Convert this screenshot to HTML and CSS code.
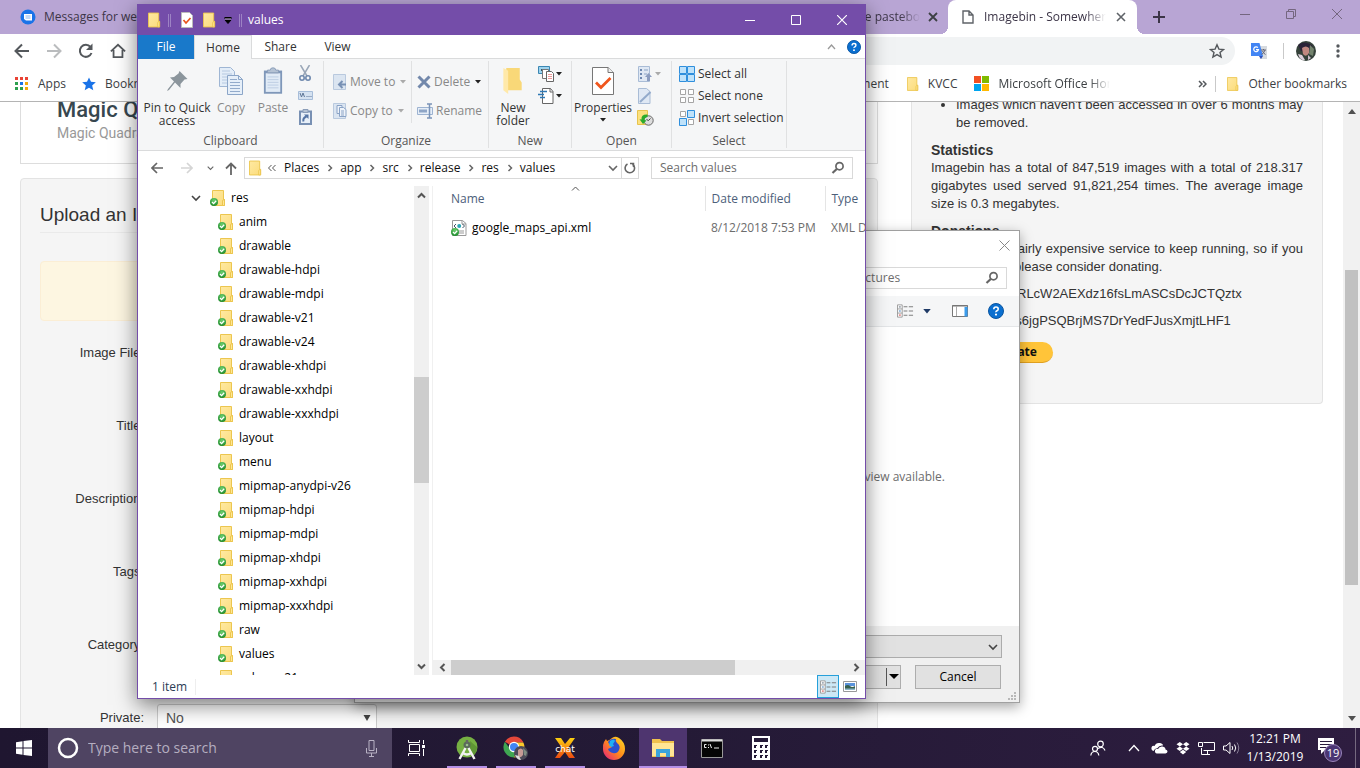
FILE: index.html
```html
<!DOCTYPE html>
<html lang="en">
<head>
<meta charset="utf-8">
<title>Desktop</title>
<link rel="stylesheet" href="styles.css">
</head>
<body>
<svg class="defs" aria-hidden="true">
  <defs>
    <linearGradient id="gFolder" x1="0" y1="0" x2="1" y2="1"><stop offset="0" stop-color="#ffe9a2"/><stop offset="1" stop-color="#fbdc7c"/></linearGradient>
    <radialGradient id="gCheck" cx=".5" cy=".3" r=".7"><stop offset="0" stop-color="#6fd06f"/><stop offset="1" stop-color="#1c8a2c"/></radialGradient>
  </defs>
  <symbol id="folder" viewBox="0 0 14 16"><path d="M.5.5h11v9h1v6H.5z" fill="url(#gFolder)" stroke="#ecc64f"/><path d="M10.500 15.500v-4.500q0-1.500 2-1.500v6z" fill="#ffe795" stroke="#ecc64f"/></symbol>
  <symbol id="folderok" viewBox="0 0 16 16"><path d="M2.500.5h11v9h1v6h-12z" fill="url(#gFolder)" stroke="#ecc64f"/><path d="M12.500 15.500v-4.500q0-1.500 2-1.500v6z" fill="#ffe795" stroke="#ecc64f"/><circle cx="4" cy="12" r="4" fill="url(#gCheck)"/><path d="M2 12l1.600 1.600L6.200 10.800" fill="none" stroke="#fff" stroke-width="1.300"/></symbol>
  <symbol id="chev-r" viewBox="0 0 8 8"><path d="M2.500 1l3 3-3 3" fill="none" stroke="#666" stroke-width="1.500"/></symbol>
  <symbol id="chev-d" viewBox="0 0 10 8"><path d="M1 2l4 4 4-4" fill="none" stroke="currentColor" stroke-width="1.600"/></symbol>
  <symbol id="tri" viewBox="0 0 6 4"><path d="M0 0h6L3 3.500z" fill="currentColor"/></symbol>
  <symbol id="lens" viewBox="0 0 14 14"><circle cx="8.500" cy="5.200" r="3.600" fill="none" stroke="#666" stroke-width="1.700"/><path d="M6 7.800L1.500 12" stroke="#666" stroke-width="2.200"/></symbol>
  <symbol id="help" viewBox="0 0 16 16"><circle cx="8" cy="8" r="7.500" fill="#0a6fd0" stroke="#0a55a0"/><path d="M5.800 6.200q0-2.200 2.200-2.200t2.200 1.900q0 1.200-1.200 1.900t-1 1.400" fill="none" stroke="#fff" stroke-width="1.600"/><circle cx="8" cy="11.600" r="1.100" fill="#fff"/></symbol>
  <symbol id="details" viewBox="0 0 18 14"><path d="M.5.5h5v13h-5zM.5 4.800h5M.5 9.200h5" fill="#fff" stroke="#999"/><path d="M2 2.200h2v1H2z" fill="#567"/><path d="M2 6.500h2v1H2z" fill="#37b"/><path d="M2 10.800h2v1H2z" fill="#c33"/><path d="M7 2.500h4M12.500 2.500H17M7 7h4M12.500 7H17M7 11.500h4M12.500 11.500H17" stroke="#777"/></symbol>
</svg>

<div class="desktop">
  <section class="browser">
    <div class="tabstrip">
      <div class="tab tab-first">
        <svg width="16" height="16" viewBox="0 0 16 16"><circle cx="8" cy="8" r="7.500" fill="#1a73e8"/><path d="M4 5h8v6.500H6L4 10z" fill="#fff"/><path d="M5.500 7h5M5.500 9h5" stroke="#8ab4f0"/></svg>
        <span>Messages for web</span>
      </div>
      <div class="tab tab-mid"><span class="fade">private pastebo</span>
        <svg width="10" height="10" viewBox="0 0 10 10"><path d="M1 1l8 8M9 1L1 9" stroke="#3c4043" stroke-width="1.800"/></svg>
      </div>
      <div class="tab tab-active">
        <svg width="12" height="14" viewBox="0 0 12 14"><path d="M1 1h6l4 4v8H1zM7 1v4h4" fill="none" stroke="#5f6368" stroke-width="1.400"/></svg>
        <span class="fade">Imagebin - Somewhere</span>
        <svg width="10" height="10" viewBox="0 0 10 10"><path d="M1 1l8 8M9 1L1 9" stroke="#5f6368" stroke-width="1.600"/></svg>
      </div>
      <button class="newtab" aria-label="New tab"><svg width="12" height="12" viewBox="0 0 12 12"><path d="M6 0v12M0 6h12" stroke="#3c3547" stroke-width="2"/></svg></button>
      <div class="winctl">
        <button aria-label="Minimize"><svg width="10" height="10" viewBox="0 0 10 10"><path d="M0 5.500h10" stroke="#74667f"/></svg></button>
        <button aria-label="Restore"><svg width="10" height="10" viewBox="0 0 10 10"><path d="M.5 2.500h7v7h-7zM2.500 2.500v-2h7v7h-2" fill="none" stroke="#74667f"/></svg></button>
        <button aria-label="Close"><svg width="10" height="10" viewBox="0 0 10 10"><path d="M0 0l10 10M10 0L0 10" stroke="#74667f"/></svg></button>
      </div>
    </div>
    <div class="toolbar">
      <button aria-label="Back"><svg width="16" height="16" viewBox="0 0 16 16"><path d="M15 8H2M8 1.500L1.500 8 8 14.500" fill="none" stroke="#54585c" stroke-width="2"/></svg></button>
      <button aria-label="Forward"><svg width="16" height="16" viewBox="0 0 16 16"><path d="M1 8h13M8 1.500L14.500 8 8 14.500" fill="none" stroke="#babcbe" stroke-width="2"/></svg></button>
      <button aria-label="Reload"><svg width="16" height="16" viewBox="0 0 16 16"><path d="M13.500 10A6 6 0 1 1 12.500 4" fill="none" stroke="#54585c" stroke-width="2"/><path d="M14.500.5v6.500H8z" fill="#54585c"/></svg></button>
      <button aria-label="Home"><svg width="16" height="16" viewBox="0 0 18 16"><path d="M1 8.500L9 1l8 7.500M4 7v8h10V7" fill="none" stroke="#54585c" stroke-width="2"/></svg></button>
      <div class="omnibox"><svg width="16" height="16" viewBox="0 0 16 16"><path d="M8 1.800l1.900 4.300 4.600.4-3.500 3 1.100 4.600L8 11.600l-4.100 2.500L5 9.500l-3.500-3 4.600-.4z" fill="none" stroke="#54585c" stroke-width="1.400"/></svg></div>
      <svg class="gt" width="16" height="16" viewBox="0 0 16 16"><path d="M6 3h10v13H9z" fill="#d6dadf"/><path d="M0 0h8.500l3.500 13H0z" fill="#4285f4"/><path d="M8 13h4l-2 3z" fill="#3050b8"/><path d="M6.900 4.600a2.400 2.400 0 1 0 .6 2.100H5" fill="none" stroke="#fff" stroke-width="1.200"/><path d="M10 7h5M12.500 6v1M14 7q-.8 3-3.500 4.500M11.500 8q1 2.500 3 3.500" fill="none" stroke="#667"/></svg>
      <span class="vline"></span>
      <svg class="ava" width="20" height="20" viewBox="0 0 20 20"><circle cx="10" cy="10" r="10" fill="#35413a"/><path d="M2 4q6-5 14 0l1 4-4 5-8-3z" fill="#2b2338"/><path d="M14 4l4 4-1 7-4-2z" fill="#73836d"/><path d="M6 7q4-3 7 0v5q-3 5-6 1z" fill="#c08780"/><path d="M2 13l4 1 3 5q-5 1-7-6z" fill="#dccfdc"/><path d="M12 14l3 3-3 2z" fill="#cdbfcd"/></svg>
      <button aria-label="Menu" class="kebab"><svg width="4" height="14" viewBox="0 0 4 14"><circle cx="2" cy="2" r="1.700" fill="#54585c"/><circle cx="2" cy="7" r="1.700" fill="#54585c"/><circle cx="2" cy="12" r="1.700" fill="#54585c"/></svg></button>
    </div>
    <nav class="bookmarks">
      <a href="#" class="bm bm-apps"><svg width="13" height="13" viewBox="0 0 13 13"><path d="M0 0h3v3H0zM5 0h3v3H5zM10 0h3v3h-3z" fill="#e94335"/><path d="M0 5h3v3H0z" fill="#2da04e"/><path d="M5 5h3v3H5z" fill="#1a73e8"/><path d="M10 5h3v3h-3z" fill="#f4a90a"/><path d="M0 10h3v3H0zM5 10h3v3H5z" fill="#2da04e"/><path d="M10 10h3v3h-3z" fill="#f4a90a"/></svg>Apps</a>
      <a href="#" class="bm"><svg width="14" height="14" viewBox="0 0 16 16"><path d="M8 .5l2.300 5 5.500.5-4.200 3.600 1.300 5.400L8 12.200 3.100 15l1.300-5.400L.2 6l5.500-.5z" fill="#1a73e8"/></svg>Bookmarks</a>
      <span class="grow"></span>
      <a href="#" class="bm bm-ment">Entertainment</a>
      <a href="#" class="bm bm-kv"><svg width="12" height="14"><use href="#folder"/></svg>KVCC</a>
      <a href="#" class="bm bm-ms"><svg width="15" height="15" viewBox="0 0 15 15"><path d="M0 0h7v7H0z" fill="#f25022"/><path d="M8 0h7v7H8z" fill="#7fba00"/><path d="M0 8h7v7H0z" fill="#00a4ef"/><path d="M8 8h7v7H8z" fill="#ffb900"/></svg><span class="fade">Microsoft Office Home</span></a>
      <button aria-label="More bookmarks" class="more"><svg width="9" height="8" viewBox="0 0 9 8"><path d="M1 1l3 3-3 3M5 1l3 3-3 3" fill="none" stroke="#54585c" stroke-width="1.500"/></svg></button>
      <span class="vline"></span>
      <a href="#" class="bm bm-other"><svg width="12" height="14"><use href="#folder"/></svg>Other bookmarks</a>
    </nav>
    <div class="viewport">
      <main class="page">
        <div class="col-main">
          <header class="card banner"><h1>Magic Quadrants</h1><p>Magic Quadrants for everyone</p></header>
          <form class="well">
            <h2>Upload an Image</h2>
            <div class="alert"></div>
            <div class="field"><label for="f1">Image File:</label><input id="f1" type="text"></div>
            <div class="field"><label for="f2">Title:</label><input id="f2" type="text"></div>
            <div class="field"><label for="f3">Description:</label><input id="f3" type="text"></div>
            <div class="field"><label for="f4">Tags:</label><input id="f4" type="text"></div>
            <div class="field"><label for="f5">Category:</label><input id="f5" type="text"></div>
            <div class="field"><label for="f6">Private:</label><span class="sel"><select id="f6"><option>No</option><option>Yes</option></select><svg width="8" height="6" viewBox="0 0 8 6"><path d="M.5 0h7L4 6z" fill="#444"/></svg></span></div>
          </form>
        </div>
        <aside class="side">
          <ul><li>Images which haven't been accessed in over 6 months may be removed.</li></ul>
          <h3>Statistics</h3>
          <p>Imagebin has a total of 847,519 images with a total of 218.317 gigabytes used served 91,821,254 times. The average image size is 0.3 megabytes.</p>
          <h3>Donations</h3>
          <p>Imagebin is a fairly expensive service to keep running, so if you enjoy using it, please consider donating.</p>
          <p>BTC: 1Lgbin7vRLcW2AEXdz16fsLmASCsDcJCTQztx</p>
          <p>LTC: LaebVX8s6jgPSQBrjMS7DrYedFJusXmjtLHF1</p>
          <button class="donate">Donate</button>
        </aside>
      </main>
      <div class="vscroll"><svg width="8" height="5" viewBox="0 0 8 5"><path d="M0 5h8L4 0z" fill="#505050"/></svg><span></span><svg width="8" height="5" viewBox="0 0 8 5"><path d="M0 0h8L4 5z" fill="#505050"/></svg></div>
    </div>
  </section>

  <section class="dialog">
    <div class="dlg-title"><button aria-label="Close"><svg width="11" height="11" viewBox="0 0 11 11"><path d="M.5.5l10 10M10.500.5l-10 10" stroke="#888"/></svg></button></div>
    <div class="dlg-nav"><div class="searchbox"><input type="text" aria-label="Search Pictures" placeholder="Search Pictures"><svg width="14" height="14"><use href="#lens"/></svg></div></div>
    <div class="dlg-tools">
      <svg width="17" height="14"><use href="#details"/></svg>
      <svg class="dd" width="8" height="5"><use href="#tri"/></svg>
      <svg class="pane" width="16" height="12" viewBox="0 0 16 12"><path d="M.5.5h15v11H.5z" fill="#fff" stroke="#777"/><path d="M0 1h16" stroke="#777"/><path d="M4.500 1v10" stroke="#aaa"/><path d="M12.500 2h3v9.500h-3z" fill="#3b9cec"/></svg>
      <svg width="16" height="16"><use href="#help"/></svg>
    </div>
    <div class="dlg-body"><span>No preview available.</span></div>
    <div class="dlg-foot">
      <div class="combo">All Files<svg width="10" height="8"><use href="#chev-d"/></svg></div>
      <div class="dlg-btns"><button class="open">Open<span></span><svg width="10" height="6" viewBox="0 0 10 6"><path d="M0 0h10L5 5z"/></svg></button><button>Cancel</button></div>
      <svg class="grip" width="8" height="8" viewBox="0 0 8 8"><path d="M6 0h2v2H6zM3 3h2v2H3zM6 3h2v2H6zM0 6h2v2H0zM3 6h2v2H3zM6 6h2v2H6z" fill="#b8b8b8"/></svg>
    </div>
  </section>

  <section class="explorer">
    <div class="titlebar">
      <svg width="13" height="16"><use href="#folder"/></svg>
      <i></i>
      <svg width="12" height="16" viewBox="0 0 12 16"><path d="M.5.500h8l3 3v12H.5z" fill="#fff" stroke="#bbb"/><path d="M2.500 8l2.500 3 4.500-5" fill="none" stroke="#e8541c" stroke-width="1.700"/></svg>
      <svg class="tf" width="13" height="16"><use href="#folder"/></svg>
      <svg width="8" height="7" viewBox="0 0 8 7"><path d="M1 3h6L4 6.500z" fill="#000" stroke="#000"/><path d="M.5 1h7" stroke="#000" stroke-width="2"/><path d="M1 2h6" stroke="#c9b8de"/></svg>
      <i class="i2"></i>
      <b>values</b>
      <div class="ctl">
        <button aria-label="Minimize"><svg width="10" height="10" viewBox="0 0 10 10"><path d="M0 5.500h10" stroke="#fff"/></svg></button>
        <button aria-label="Maximize"><svg width="10" height="10" viewBox="0 0 10 10"><path d="M.5.500h9v9h-9z" fill="none" stroke="#fff"/></svg></button>
        <button aria-label="Close"><svg width="10" height="10" viewBox="0 0 10 10"><path d="M0 0l10 10M10 0L0 10" stroke="#fff" stroke-width="1.200"/></svg></button>
      </div>
    </div>
    <div class="tabs">
      <button class="t-file">File</button><button class="t-home">Home</button><button>Share</button><button>View</button>
      <span class="rest"><svg width="9" height="6" viewBox="0 0 9 6"><path d="M1 5l3.500-4L8 5" fill="none" stroke="#999" stroke-width="1.300"/></svg><svg width="14" height="14"><use href="#help"/></svg></span>
    </div>
    <div class="ribbon">
      <div class="group">
        <div class="tools">
          <button class="big pin"><svg width="24" height="28" viewBox="0 0 24 28"><path d="M14.500 4l8 8-3 .5-4 4.500v4L10 15.500 4 23l-2 1 1-2 6-7.500L5 10.500l4-.5 4.500-3.500z" fill="#8b959c"/></svg><span>Pin to Quick<br>access</span></button>
          <button class="big off"><svg width="24" height="28" viewBox="0 0 24 28"><path d="M.5.500h11l4 4v15H.5z" fill="#e3edf8" stroke="#9fb6d4"/><path d="M3 4h8M3 7h10M3 10h10M3 13h10M3 16h10" stroke="#b6c9e1"/><path d="M8.500 8.500h11l4 4v15h-15z" fill="#e6eff9" stroke="#8ca6c8"/><path d="M19.500 8.500v4h4" fill="none" stroke="#8ca6c8"/><path d="M11 12.500h7M11 15.500h10M11 18.500h10M11 21.500h10M11 24.500h10" stroke="#93abcb"/></svg>Copy</button>
          <button class="big off"><svg width="20" height="28" viewBox="0 0 22 30"><path d="M1 3.500h20V29H1z" fill="#7f97b9"/><path d="M3 6.500h16V27H3z" fill="#e1ebf6"/><path d="M5 10.500h12M5 13.500h12M5 16.500h12M5 19.500h12M5 22.500h12" stroke="#b9cbe2"/><path d="M5 3h3q0-2.500 3-2.500T14 3h3v3H5z" fill="#b4c2d4" stroke="#8a9db8"/></svg>Paste</button>
          <div class="stack clip">
            <svg width="12" height="17" viewBox="0 0 12 17"><path d="M1.500 0L8 11M10.500 0L4 11" stroke="#9aa7b8" stroke-width="1.500"/><circle cx="3" cy="13" r="2.200" fill="none" stroke="#6f89ae" stroke-width="1.600"/><circle cx="9" cy="13" r="2.200" fill="none" stroke="#6f89ae" stroke-width="1.600"/></svg>
            <svg width="15" height="9" viewBox="0 0 15 9"><path d="M.5.500h14v8H.5z" fill="#d5e2f1" stroke="#a7bdd9"/><path d="M2 2l1.500 4L5 2l1.500 4M8.500 5.500h1M10.500 5.500h1M12.500 5.500h1" fill="none" stroke="#5f7798"/></svg>
            <svg width="13" height="16" viewBox="0 0 13 16"><path d="M1 2.500h11V15H1z" fill="#e8f0f9" stroke="#7890b3" stroke-width="2"/><path d="M4 .5h5v3H4z" fill="#b4c2d4" stroke="#8a9db8"/><path d="M4.500 12.500q-1-3.500 3-5" fill="none" stroke="#5474a4" stroke-width="2"/><path d="M5 5.500h4.500V10z" fill="#5474a4"/></svg>
          </div>
        </div>
        <span class="glabel">Clipboard</span>
      </div>
      <div class="group org">
        <div class="tools">
          <div class="rows">
            <button class="small off"><svg width="14" height="16" viewBox="0 0 14 16"><path d="M.5.500h12v15H.5z" fill="#dbe5f1" stroke="#b9c9de"/><path d="M13 10.500H7M9.500 7L6 10.500 9.500 14" fill="none" stroke="#7891b5" stroke-width="2"/></svg>Move to<svg class="a" width="6" height="4"><use href="#tri"/></svg></button>
            <button class="small off"><svg width="14" height="16" viewBox="0 0 14 16"><path d="M.5.500h12v15H.5z" fill="#dbe5f1" stroke="#b9c9de"/><path d="M4 2.500h5v8H4z" fill="#eef3fa" stroke="#8aa3c6"/><path d="M6.500 4.500h4l2.500 2v7H6.500zM8 8h3M8 10h3M8 12h3" fill="#eef3fa" stroke="#8aa3c6"/></svg>Copy to<svg class="a" width="6" height="4"><use href="#tri"/></svg></button>
          </div>
          <div class="rows r2">
            <button class="small off"><svg width="14" height="14" viewBox="0 0 14 14"><path d="M1.500 1.500l11 11M12.500 1.500l-11 11" stroke="#7288ab" stroke-width="3"/></svg>Delete<svg class="a dark" width="6" height="4"><use href="#tri"/></svg></button>
            <button class="small off ren"><svg width="16" height="16" viewBox="0 0 16 16"><path d="M.5 4.500h15v7H.5z" fill="#e6eef8" stroke="#9db3d1"/><path d="M2 6.500h8v3H2z" fill="#8fa6c7"/><path d="M10 1h5M10 15h5M12.500 1v14" stroke="#7a93b8" stroke-width="1.500"/></svg>Rename</button>
          </div>
        </div>
        <span class="glabel">Organize</span>
      </div>
      <div class="group new">
        <div class="tools">
          <button class="big"><svg width="20" height="28" viewBox="0 0 20 29"><path d="M3 1h14v12l2 3v8H3z" fill="#f9d878"/><path d="M0 1l5 3v24l-5-4z" fill="#ffe9a9"/></svg><span>New<br>folder</span></button>
          <div class="stack s22">
            <span><svg width="16" height="16" viewBox="0 0 16 16"><path d="M.5.500h11v7H.5z" fill="#9ed3ee" stroke="#3b87b3"/><path d="M3 3h6v2H3z" fill="#356"/><path d="M4.500 3.500h6v9h-6z" fill="#fff" stroke="#777"/><path d="M8.500 5.500h5l2 2v8h-7z" fill="#fff" stroke="#666"/><path d="M10 8.500h4M10 10.500h4M10 12.500h4" stroke="#e99"/></svg><svg class="a dark" width="6" height="4"><use href="#tri"/></svg></span>
            <span><svg width="16" height="16" viewBox="0 0 16 16"><path d="M4.500.500h8l2.500 3v12H4.500z" fill="#fff" stroke="#666"/><path d="M12 .5v3.500h3" fill="none" stroke="#666"/><path d="M2 3.500h7M0 6.500h6M2 9.500h5" stroke="#2f79b5" stroke-width="1.300"/></svg><svg class="a dark" width="6" height="4"><use href="#tri"/></svg></span>
          </div>
        </div>
        <span class="glabel">New</span>
      </div>
      <div class="group opn">
        <div class="tools">
          <button class="big"><svg width="22" height="28" viewBox="0 0 22 28"><path d="M.5.500h15.500l5.500 5v22H.5z" fill="#fff" stroke="#777"/><path d="M16 .5v5h5.500" fill="#eee" stroke="#777"/><path d="M4 15.500l5 5L18.500 11" fill="none" stroke="#f0561d" stroke-width="2.800"/></svg>Properties<svg class="a dark pa" width="6" height="4"><use href="#tri"/></svg></button>
          <div class="stack s22">
            <span><svg width="16" height="16" viewBox="0 0 16 16"><path d="M1.500.500h11v15h-11z" fill="#dfe8f4" stroke="#a9bcd6"/><path d="M3 3h2v2H3zM3 7h2v2H3zM3 11h2v2H3z" fill="#6d88b0"/><path d="M7 4h4M7 8h3" stroke="#8ba3c5"/><path d="M8 11l3.500-4 3.500 4h-2v4h-3v-4z" fill="#8b9dc0"/></svg><svg class="a" width="6" height="4"><use href="#tri"/></svg></span>
            <span><svg width="16" height="16" viewBox="0 0 16 16"><path d="M1.500.500h8l3.500 3v12H1.500z" fill="#dfe8f4" stroke="#a9bcd6"/><path d="M3 14L13.500 4" stroke="#93aacb" stroke-width="2"/></svg></span>
            <span class="hist"><svg width="17" height="16" viewBox="0 0 17 16"><path d="M.5.500h10v14H.5z" fill="#fbe07f" stroke="#e7c34c"/><circle cx="11.500" cy="10.500" r="4.700" fill="#ddd" stroke="#666"/><path d="M11.500 10.500l2-2M9.500 9.500l2 1" fill="none" stroke="#444"/><path d="M10.500 4.500Q4 4 4.500 9.500l-2-.3L6 14l3.500-3.500-2-.5q0-2.500 3-3z" fill="#2bab2b"/></svg></span>
          </div>
        </div>
        <span class="glabel">Open</span>
      </div>
      <div class="group slc">
        <div class="tools">
          <div class="stack s22">
            <button class="small"><svg width="16" height="16" viewBox="0 0 16 16"><path d="M.5.500h7v7h-7zM8.500.500h7v7h-7zM.5 8.500h7v7h-7zM8.500 8.500h7v7h-7z" fill="#bfe2fa" stroke="#2f8fdd"/></svg>Select all</button>
            <button class="small"><svg width="16" height="16" viewBox="0 0 16 16"><path d="M1.500 1.500h5v5h-5zM9.500 1.500h5v5h-5zM1.500 9.500h5v5h-5zM9.500 9.500h5v5h-5z" fill="#fff" stroke="#a5a5a5"/></svg>Select none</button>
            <button class="small"><svg width="16" height="16" viewBox="0 0 16 16"><path d="M1.500 1.500h5v5h-5zM9.500 9.500h5v5h-5z" fill="#fff" stroke="#a5a5a5"/><path d="M8.500.500h7v7h-7zM.5 8.500h7v7h-7z" fill="#bfe2fa" stroke="#2f8fdd"/></svg>Invert selection</button>
          </div>
        </div>
        <span class="glabel">Select</span>
      </div>
    </div>
    <div class="navrow">
      <button aria-label="Back"><svg width="12" height="12" viewBox="0 0 12 12"><path d="M12 6H1M6 1L1 6l5 5" fill="none" stroke="#666" stroke-width="1.700"/></svg></button>
      <button aria-label="Forward" class="fw"><svg width="12" height="12" viewBox="0 0 12 12"><path d="M0 6h11M6 1l5 5-5 5" fill="none" stroke="#d5d5d5" stroke-width="1.700"/></svg></button>
      <button aria-label="Recent" class="rc"><svg width="7" height="6"><use href="#chev-d"/></svg></button>
      <button aria-label="Up" class="up"><svg width="12" height="13" viewBox="0 0 12 13"><path d="M6 13V1.500M1 6.500l5-5 5 5" fill="none" stroke="#666" stroke-width="1.800"/></svg></button>
      <div class="address">
        <svg class="af" width="13" height="16"><use href="#folder"/></svg>
        <svg class="lq" width="8" height="8" viewBox="0 0 8 8"><path d="M3.500 1l-3 3 3 3M7.500 1l-3 3 3 3" fill="none" stroke="#555"/></svg>
        <a href="#">Places</a><svg class="cr" width="8" height="8"><use href="#chev-r"/></svg><a href="#">app</a><svg class="cr" width="8" height="8"><use href="#chev-r"/></svg><a href="#">src</a><svg class="cr" width="8" height="8"><use href="#chev-r"/></svg><a href="#">release</a><svg class="cr" width="8" height="8"><use href="#chev-r"/></svg><a href="#">res</a><svg class="cr" width="8" height="8"><use href="#chev-r"/></svg><a href="#">values</a>
        <span class="grow"></span>
        <svg class="dn" width="10" height="8"><use href="#chev-d"/></svg>
        <button class="ref" aria-label="Refresh"><svg width="12" height="12" viewBox="0 0 12 12"><path d="M3.500 2a4.700 4.700 0 1 0 5 .2" fill="none" stroke="#666" stroke-width="1.600"/><path d="M6 1.500h3.500V5" fill="none" stroke="#666" stroke-width="1.500"/></svg></button>
      </div>
      <div class="searchbox"><input type="text" aria-label="Search values" placeholder="Search values"><svg width="14" height="14"><use href="#lens"/></svg></div>
    </div>
    <div class="panes">
      <ul class="tree">
        <li class="root"><svg width="10" height="8"><use href="#chev-d"/></svg><svg width="16" height="16"><use href="#folderok"/></svg>res</li>
        <li><svg width="16" height="16"><use href="#folderok"/></svg>anim</li>
        <li><svg width="16" height="16"><use href="#folderok"/></svg>drawable</li>
        <li><svg width="16" height="16"><use href="#folderok"/></svg>drawable-hdpi</li>
        <li><svg width="16" height="16"><use href="#folderok"/></svg>drawable-mdpi</li>
        <li><svg width="16" height="16"><use href="#folderok"/></svg>drawable-v21</li>
        <li><svg width="16" height="16"><use href="#folderok"/></svg>drawable-v24</li>
        <li><svg width="16" height="16"><use href="#folderok"/></svg>drawable-xhdpi</li>
        <li><svg width="16" height="16"><use href="#folderok"/></svg>drawable-xxhdpi</li>
        <li><svg width="16" height="16"><use href="#folderok"/></svg>drawable-xxxhdpi</li>
        <li><svg width="16" height="16"><use href="#folderok"/></svg>layout</li>
        <li><svg width="16" height="16"><use href="#folderok"/></svg>menu</li>
        <li><svg width="16" height="16"><use href="#folderok"/></svg>mipmap-anydpi-v26</li>
        <li><svg width="16" height="16"><use href="#folderok"/></svg>mipmap-hdpi</li>
        <li><svg width="16" height="16"><use href="#folderok"/></svg>mipmap-mdpi</li>
        <li><svg width="16" height="16"><use href="#folderok"/></svg>mipmap-xhdpi</li>
        <li><svg width="16" height="16"><use href="#folderok"/></svg>mipmap-xxhdpi</li>
        <li><svg width="16" height="16"><use href="#folderok"/></svg>mipmap-xxxhdpi</li>
        <li><svg width="16" height="16"><use href="#folderok"/></svg>raw</li>
        <li><svg width="16" height="16"><use href="#folderok"/></svg>values</li>
        <li><svg width="16" height="16"><use href="#folderok"/></svg>values-v21</li>
      </ul>
      <div class="tscroll"><svg width="9" height="7" viewBox="0 0 9 7"><path d="M1 5.500l3.500-3.500L8 5.500" fill="none" stroke="#555" stroke-width="2"/></svg><span></span><svg width="9" height="7" viewBox="0 0 9 7"><path d="M1 1.500L4.500 5 8 1.500" fill="none" stroke="#555" stroke-width="2"/></svg></div>
      <div class="files">
        <div class="clipx">
          <table>
            <thead><tr><th class="c1">Name<svg class="sort" width="9" height="5" viewBox="0 0 9 5"><path d="M1 4.500L4.500 1 8 4.500" fill="none" stroke="#555"/></svg></th><th class="c2">Date modified</th><th>Type</th></tr></thead>
            <tbody><tr><td><span class="fn"><svg width="16" height="16" viewBox="0 0 16 16"><path d="M1.500.500h10l3.500 3v12H1.500z" fill="#fff" stroke="#999"/><path d="M11 .5v3.500h4" fill="none" stroke="#999"/><path d="M5 4L3 6l2 2M11.500 4l2 2-2 2" fill="none" stroke="#456"/><circle cx="8.200" cy="6" r="2" fill="#2ba5b5"/><path d="M8 11h5M8 13h5" stroke="#999"/><circle cx="4" cy="12" r="4" fill="url(#gCheck)"/><path d="M2 12l1.600 1.600L6.200 10.800" fill="none" stroke="#fff" stroke-width="1.300"/></svg>google_maps_api.xml</span></td><td>8/12/2018 7:53 PM</td><td>XML Document</td></tr></tbody>
          </table>
        </div>
        <div class="hscroll"><svg width="7" height="9" viewBox="0 0 7 9"><path d="M5.500 1L2 4.500 5.500 8" fill="none" stroke="#555" stroke-width="2"/></svg><span></span><svg width="7" height="9" viewBox="0 0 7 9"><path d="M1.500 1L5 4.500 1.500 8" fill="none" stroke="#555" stroke-width="2"/></svg></div>
      </div>
    </div>
    <div class="status"><span class="cnt">1 item</span>
      <button class="v1" aria-label="Details view"><svg width="17" height="14"><use href="#details"/></svg></button>
      <button class="v2" aria-label="Large icons"><svg width="14" height="11" viewBox="0 0 14 11"><path d="M.5.500h13v10H.5z" fill="#fff" stroke="#999"/><path d="M2 2h10v3H2z" fill="#5a93dc"/><path d="M2 5q3-2 5 0t5 0v4H2z" fill="#37604f"/><path d="M2 7.500h10v1.500H2z" fill="#8db6c9"/></svg></button>
    </div>
  </section>

  <footer class="taskbar">
    <button class="start" aria-label="Start"><svg width="16" height="16" viewBox="0 0 16 16"><path d="M0 2.200L6.500 1.200v6.300H0zM7.500 1.100L16 0v7.500H7.500zM0 8.500h6.500v6.300L0 13.800zM7.500 8.500H16V16l-8.500-1.100z" fill="#fff"/></svg></button>
    <div class="tsearch"><svg width="22" height="22" viewBox="0 0 22 22"><circle cx="11" cy="11" r="9" fill="none" stroke="#fff" stroke-width="2.500"/></svg><input type="text" aria-label="Type here to search" placeholder="Type here to search"><svg width="11" height="17" viewBox="0 0 11 17"><path d="M3 .5h5v10H3zM.5 8v5h10V8M5.500 13v3M3 16.500h5" fill="none" stroke="#b9b2c4"/></svg></div>
    <div class="apps">
      <button class="tv" aria-label="Task view"><svg width="17" height="16" viewBox="0 0 17 16"><path d="M1.500 4.500h10v7h-10zM.5 0v2.500h11V0M.5 16v-2.500h11V16M15.500 0v4M15.500 9v7" fill="none" stroke="#fff"/><path d="M14 5h3v3h-3z" fill="#fff"/></svg></button>
      <button class="run" aria-label="Android Studio"><svg width="22" height="24" viewBox="0 0 22 24"><circle cx="11" cy="11" r="10.500" fill="#76b043"/><path d="M14 5l7 6q0 5-3 8l-6-8z" fill="#5f9634"/><circle cx="11" cy="9" r="3.500" fill="#5a6a5a"/><path d="M11 4v3" stroke="#666" stroke-width="2.400"/><circle cx="11" cy="9" r="1.300" fill="#9abf8c"/><path d="M9.500 12L3.500 23M12.500 12l6 11M7 17q4 3 8 0" fill="none" stroke="#f2f2f2" stroke-width="2.400"/></svg></button>
      <button class="run" aria-label="Chrome"><svg width="26" height="26" viewBox="0 0 26 26"><path d="M11 12L1.900 6.750A10.500 10.500 0 0 1 20.100 6.750L20 7.500H11z" fill="#e5483a"/><path d="M1.900 6.750A10.500 10.500 0 0 0 11 22.500l4.500-8L7 14z" fill="#3fa652"/><path d="M20.400 7.500H11l4 7-4 8A10.500 10.500 0 0 0 20.400 7.500z" fill="#fbc92b"/><circle cx="11" cy="12" r="5.200" fill="#fff"/><circle cx="11" cy="12" r="4" fill="#4285f4"/><circle cx="18" cy="18" r="7" fill="#4c4a58"/><path d="M15 15q3-3 5 0v5q-3 4-5 1z" fill="#c69a95"/><path d="M12 20l4 1 2 4q-4 0-6-5z" fill="#ddd"/><path d="M20 13l4 4-1 4-2-1z" fill="#7f8e83"/></svg></button>
      <button class="run" aria-label="X-Chat"><svg width="24" height="24" viewBox="0 0 24 24"><defs><linearGradient id="gx" x1="0" y1="0" x2="0" y2="1"><stop offset="0" stop-color="#fbd110"/><stop offset="1" stop-color="#ee4a10"/></linearGradient></defs><path d="M2 2h6l4 6 5-6h5l-7 10 7 10h-6l-4-6-5 6H2l7-10z" fill="url(#gx)"/><text x="12" y="16" text-anchor="middle" class="xt">chat</text></svg></button>
      <button aria-label="Firefox"><svg width="24" height="24" viewBox="0 0 24 24"><defs><linearGradient id="gf" x1="1" y1="0" x2="0" y2="1"><stop offset="0" stop-color="#ffe226"/><stop offset=".5" stop-color="#ff8a1b"/><stop offset="1" stop-color="#e31587"/></linearGradient></defs><path d="M2 6l2-3 1 2q3-1 5-3 3-2 5-1l2 1q6 4 6 11a11 11 0 0 1-22 0q-.5-4 1-7z" fill="url(#gf)"/><path d="M6 6q3-4 8-3-1 2 1 4 4 3 2 7t-6 3-5-4l4-2-1-2q-2 0-3-3z" fill="#2b50cf"/><path d="M8 5q4-3 5 0l-2 3 1 2-3 1-2-2z" fill="#1fb0f5"/></svg></button>
      <button class="run act" aria-label="File Explorer"><svg width="22" height="20" viewBox="0 0 22 20"><path d="M0 1h8l2 2h12v16H0z" fill="#f0c14d"/><path d="M0 5h22v13H0z" fill="#ffe595"/><path d="M4 19v-8h14v8h-4v-4H8v4z" fill="#3ba4dc"/></svg></button>
      <button aria-label="Command Prompt"><svg width="22" height="19" viewBox="0 0 22 19"><path d="M.5.500h21v18H.5z" fill="#050505" stroke="#999"/><path d="M1 1.500h20" stroke="#ddd" stroke-width="2"/><path d="M5.500 5.500H3.500v3h2M7.500 5.500v1M7.500 8v1M9 5l1.500 4M13 9h5" fill="none" stroke="#eee"/></svg></button>
      <button aria-label="Calculator"><svg width="18" height="24" viewBox="0 0 18 24"><path d="M0 0h18v24H0z" fill="#fff"/><path d="M2 2h14v4H2zM2 9h3v1H4v2H2zM8 9h3v1h-1v2H8zM13 9h3v1h-1v2h-2zM2 14h3v1H4v2H2zM8 14h3v1h-1v2H8zM13 14h3v1h-1v2h-2zM2 19h3v1H4v2H2zM8 19h3v1h-1v2H8zM13 19h3v1h-1v2h-2z" fill="#251a38"/></svg></button>
    </div>
    <div class="tray">
      <svg width="16" height="16" viewBox="0 0 16 16"><circle cx="10.500" cy="4" r="2.800" fill="none" stroke="#fff" stroke-width="1.200"/><path d="M8 8.500q5-3 7 2M.8 15.500q.5-4 4-4t4 4" fill="none" stroke="#fff" stroke-width="1.200"/><circle cx="5" cy="8.800" r="2.500" fill="none" stroke="#fff" stroke-width="1.200"/></svg>
      <svg class="m1" width="12" height="8" viewBox="0 0 12 8"><path d="M1 7l5-5.500L11 7" fill="none" stroke="#fff" stroke-width="1.300"/></svg>
      <svg width="17" height="12" viewBox="0 0 17 12"><path d="M2.500 9Q0 8 .5 5.500T3.500 4Q5 .5 8.500 1T12 3.500q-4-.5-5.500 2.500-3 .5-4 3z" fill="#fff"/><path d="M6 11.500q-2.500-.5-2-3T7 7q1.500-3 4.500-2.500t3 3q2 .5 2 2t-2 2z" fill="#fff"/></svg>
      <svg width="14" height="13" viewBox="0 0 14 13"><path d="M3.800 0L7 2.200 3.800 4.500.5 2.200zM10.200 0l3.300 2.200-3.300 2.300L7 2.200zM3.800 4.500L7 6.700 3.800 9 .5 6.700zM10.200 4.500l3.300 2.200L10.200 9 7 6.700zM7 7.800l3.200 2.200L7 12.500 3.800 10z" fill="#fff"/></svg>
      <svg width="17" height="14" viewBox="0 0 17 14"><path d="M5.500 1.500h11v8h-11M3.500 7v6.500h8.500M9.500 9.500v4M.5 1.500h4v4h-4z" fill="none" stroke="#fff"/></svg>
      <svg width="17" height="14" viewBox="0 0 17 14"><path d="M.5 5h2.500l4-3.500v11L3 9H.5zM9 5q1.500 2 0 4M11.500 3.500q2.500 3.500 0 7" fill="none" stroke="#fff"/><path d="M14 1.500q3.500 5.500 0 11" fill="none" stroke="#8a7f98"/></svg>
      <div class="clock"><span>12:21 PM</span><span>1/13/2019</span></div>
      <div class="note"><svg width="16" height="16" viewBox="0 0 16 16"><path d="M0 0h16v12H7l-4 4v-4H0z" fill="#fff"/><path d="M2 3.500h12M2 6.500h12M2 9.500h9" stroke="#2a1d3e"/></svg><span>19</span></div>
    </div>
    <button class="peek" aria-label="Show desktop"></button>
  </footer>
</div>
</body>
</html>
```
FILE: styles.css
```css
* { box-sizing: border-box; }
body { margin: 0; overflow: hidden; font: 12px/16px "Open Sans", "Noto Sans", sans-serif; color: #222; }
button { font: inherit; color: inherit; background: none; border: 0; padding: 0; }
a { color: inherit; text-decoration: none; }
input, select { font: inherit; }
svg { display: block; flex: none; }
h1, h2, h3, p, ul { margin: 0; padding: 0; }
.defs { position: absolute; width: 0; height: 0; }
.grow { flex: 1; }
.desktop { position: relative; height: 100vh; display: flex; flex-direction: column; overflow: hidden; }

/* Browser */
.browser { flex: 1; min-height: 0; display: flex; flex-direction: column; background: #fff; }
.tabstrip { display: flex; height: 34px; background: #b8a5d4; color: #3c3547; }
.tab { display: flex; align-items: center; gap: 8px; white-space: nowrap; }
.tab-first { flex: 1; padding-left: 20px; }
.tab-mid { justify-content: flex-end; gap: 8px; padding-right: 10px; width: 187px; }
.fade { overflow: hidden; -webkit-mask-image: linear-gradient(to left, transparent, #000 20px); mask-image: linear-gradient(to left, transparent, #000 20px); }
.tab-active { position: relative; width: 189px; padding: 0 11px 0 14px; gap: 10px; background: #fff; border-radius: 8px 8px 0 0; }
.tab-active .fade { flex: 1; }
.tab-active::before, .tab-active::after { content: ""; position: absolute; bottom: 0; width: 8px; height: 8px; }
.tab-active::before { left: -8px; background: radial-gradient(circle at 0 0, transparent 8px, #fff 8px); }
.tab-active::after { right: -8px; background: radial-gradient(circle at 100% 0, transparent 8px, #fff 8px); }
.newtab { width: 44px; display: grid; place-items: center; }
.winctl { display: flex; margin-left: 41px; height: 28px; }
.winctl button { width: 46px; display: grid; place-items: center; }
.toolbar { display: flex; align-items: center; height: 34px; padding: 0 6px 0 14px; gap: 16px; }
.omnibox { flex: 1; height: 28px; margin-left: -4px; border-radius: 14px; background: #f1f3f4; display: flex; align-items: center; justify-content: flex-end; padding-right: 10px; }
.vline { width: 1px; height: 16px; background: #c9c9c9; }
.ava { margin-left: -4px; }
.kebab { width: 20px; display: grid; place-items: center; margin: 0 6px 0 -4px; }
.bookmarks { display: flex; align-items: center; height: 34px; border-bottom: 1px solid #b4b4b4; padding: 0 13px 2px 15px; color: #3c4043; white-space: nowrap; }
.bm { display: flex; align-items: center; gap: 9px; }
.bm-apps { margin-right: 16px; gap: 10px; }
.bm-kv { margin-left: 18px; }
.bm-ms { margin-left: 17px; }
.bm-ms .fade { width: 112px; }
.more { width: 12px; margin-left: 88px; }
.bookmarks .vline { margin: 0 11px 0 5px; }

/* Web page */
.viewport { flex: 1; min-height: 0; display: flex; overflow: hidden; font: 13px/18px "Liberation Sans", Arial, sans-serif; color: #333; }
.page { flex: 1; margin-top: -6px; display: flex; align-items: flex-start; gap: 33px; padding: 0 20px; }
.col-main { flex: 1; }
.card { border: 1px solid #ddd; border-top: 0; padding: 0 36px 21px; margin-bottom: 14px; font-family: Roboto, sans-serif; }
.banner h1 { font-size: 22px; line-height: 28px; font-weight: 500; color: #37474f; }
.banner p { font-size: 14px; line-height: 18px; color: #999; }
.well { background: #f5f5f5; border: 1px solid #e3e3e3; border-radius: 4px; padding: 19px; }
.well h2 { font-size: 19px; line-height: 34px; font-weight: 400; border-bottom: 1px solid #eaeaea; margin-bottom: 28px; }
.alert { height: 60px; background: #fdf6e1; border: 1px solid #fbeed5; border-radius: 4px; margin-bottom: 18px; }
.field { display: flex; align-items: center; gap: 13px; height: 28px; margin-bottom: 45px; }
.field label { width: 104px; text-align: right; }
.field input, .field select { width: 220px; height: 28px; border: 1px solid #ccc; border-radius: 3px; background: #fff; color: #555; padding: 0 8px; font-size: 14px; }
.field select { appearance: none; }
.sel { position: relative; }
.sel svg { position: absolute; right: 6px; top: 11px; }
.side { width: 412px; background: #f5f5f5; border: 1px solid #e3e3e3; border-top: 0; border-radius: 0 0 4px 4px; padding: 0 19px 40px; text-align: justify; }
.side ul { padding-left: 25px; margin-bottom: 9px; }
.side h3 { font-size: 14px; line-height: 18px; }
.side p { margin-bottom: 9px; }
.donate { display: block; width: 122px; height: 21px; margin-top: 12px; padding-right: 16px; border-radius: 11px; background: #ffc439; border-bottom: 1px solid #e0a020; font: bold 12px/20px "Noto Sans", sans-serif; color: #111; text-align: right; }
.vscroll { width: 17px; background: #f1f1f1; display: flex; flex-direction: column; align-items: center; padding: 7px 0; }
.vscroll span { width: 13px; height: 315px; margin: 156px 0 auto; background: #c1c1c1; }

/* Open-file dialog */
.dialog { position: absolute; left: 354px; top: 230px; width: 666px; height: 473px; display: flex; flex-direction: column; background: #fff; border: 1px solid #a0a0a0; box-shadow: 0 4px 12px rgba(0,0,0,.35); }
.dlg-title { height: 36px; display: flex; justify-content: flex-end; padding: 9px 9px 0; }
.dlg-title button { height: 11px; }
.dlg-nav { display: flex; justify-content: flex-end; padding: 0 12px 7px; }
.searchbox { display: flex; align-items: center; width: 202px; height: 22px; border: 1px solid #d9d9d9; padding: 0 7px 0 8px; background: #fff; }
.searchbox input { flex: 1; min-width: 0; border: 0; padding: 0; outline: 0; background: none; }
.searchbox input::placeholder { color: #6d6d6d; }
.dlg-tools { height: 31px; display: flex; align-items: center; justify-content: flex-end; padding-right: 15px; background: #f5f6f7; border-bottom: 1px solid #e4e6e8; }
.dd { margin: 0 21px 0 9px; color: #1f3a66; }
.pane { margin-right: 20px; }
.dlg-body { flex: 1; display: flex; align-items: center; justify-content: flex-end; padding-right: 74px; color: #6d6d6d; }
.dlg-foot { position: relative; height: 76px; background: #f0f0f0; padding: 9px 17px 0 40px; }
.combo { height: 23px; display: flex; align-items: center; justify-content: space-between; border: 1px solid #acacac; background: #e1e1e1; padding: 0 3px 0 6px; margin-bottom: 7px; color: #444; }
.dlg-btns { display: flex; justify-content: flex-end; gap: 14px; padding-right: 1px; color: #000; }
.dlg-btns button { width: 86px; height: 24px; border: 1px solid #adadad; background: #e1e1e1; }
.dlg-btns .open { display: flex; align-items: center; justify-content: flex-end; padding-right: 1px; }
.open span { width: 1px; height: 18px; background: #555; margin: 0 2px 0 20px; }
.grip { position: absolute; right: 3px; bottom: 2px; }

/* File explorer */
.explorer { position: absolute; left: 137px; top: 4px; width: 729px; height: 695px; display: flex; flex-direction: column; background: #fff; border: 1px solid #744da9; box-shadow: 0 6px 20px rgba(0,0,0,.5); }
.titlebar { height: 30px; display: flex; align-items: center; background: #744da9; color: #fff; padding-left: 10px; }
.titlebar i { width: 3px; height: 13px; border: solid #9d83c4; border-width: 0 1px; margin: 0 10px 0 7px; }
.titlebar .tf { margin: 0 8px 0 10px; }
.titlebar .i2 { margin: 0 6px 0 7px; }
.titlebar b { font-weight: 400; }
.ctl { display: flex; align-self: stretch; margin-left: auto; }
.ctl button { width: 46px; display: grid; place-items: center; }
.tabs { display: flex; height: 24px; }
.tabs button { width: 57px; border-bottom: 1px solid #dadbdc; color: #333; }
.tabs .t-file { width: 56px; background: #1979ca; color: #fff; border-color: #1979ca; }
.tabs .t-home { width: 58px; background: #f5f6f7; border: solid #dadbdc; border-width: 1px 1px 0; }
.rest { flex: 1; display: flex; align-items: center; justify-content: flex-end; gap: 11px; padding-right: 4px; border-bottom: 1px solid #dadbdc; }
.ribbon { display: flex; height: 92px; background: #f5f6f7; border-bottom: 1px solid #dadbdc; padding: 2px 0; }
.group { display: flex; flex-direction: column; width: 186px; border-right: 1px solid #e0e1e2; }
.tools { flex: 1; display: flex; padding-left: 6px; }
.glabel { text-align: center; color: #555; line-height: 14px; }
.big { width: 42px; height: 66px; display: flex; flex-direction: column; align-items: center; justify-content: flex-start; padding-top: 6px; line-height: 13px; color: #333; white-space: nowrap; text-align: center; }
.big svg { margin-bottom: 6px; }
.pin { width: 66px; }
.off { color: #888; }
.stack { display: flex; flex-direction: column; align-items: center; }
.clip { width: 22px; padding-top: 4px; gap: 9px; }
.small { display: flex; align-items: center; gap: 3px; height: 22px; white-space: nowrap; color: #333; }
.small.off { color: #888; }
.a { margin-left: 2px; color: #aaa; }
.a.dark { color: #222; }
.org { width: 165px; }
.rows { display: flex; flex-direction: column; gap: 7px; padding: 10px 7px 0 3px; }
.org .rows { width: 81px; height: 62px; }
.org .r2 { width: 78px; padding: 10px 0 0 5px; border-left: 1px solid #e0e1e2; }
.new { width: 83px; }
.new .tools { padding-left: 3px; }
.s22 { padding: 2px 0 0 4px; align-items: flex-start; }
.s22 span { display: flex; align-items: center; height: 22px; }
.opn { width: 100px; }
.opn .tools { padding-left: 4px; }
.opn .big { width: 54px; }
.opn .s22 { padding-left: 7px; }
.big .pa { margin: 4px 0 0; }
.slc { width: 115px; }
.slc .s22 { padding-left: 1px; }
.navrow { display: flex; align-items: center; height: 35px; padding: 0 12px 1px 13px; color: #666; }
.fw { margin-left: 18px; }
.rc { margin-left: 14px; }
.up { margin-left: 11px; }
.address { flex: 1; display: flex; align-items: center; height: 22px; margin: 0 12px 0 7px; border: 1px solid #d9d9d9; color: #111; padding-left: 4px; }
.lq { margin: 0 8px 0 6px; }
.cr { margin: 0 6px 0 7px; }
.dn { color: #666; margin-right: 3px; }
.ref { align-self: stretch; width: 17px; display: grid; place-items: center; border-left: 1px solid #d9d9d9; }
.panes { flex: 1; min-height: 0; display: flex; }
.tree { width: 276px; list-style: none; overflow: hidden; color: #000; }
.tree li { display: flex; align-items: center; gap: 5px; height: 24px; padding-left: 80px; }
.tree .root { padding-left: 53px; color: #000; }
.tree .root svg:first-child { color: #444; margin-right: 4px; }
.tscroll { width: 15px; background: #f0f0f0; display: flex; flex-direction: column; align-items: center; padding: 6px 0 5px; }
.tscroll span { width: 15px; height: 106px; margin: 178px 0 auto; background: #cdcdcd; }
.files { flex: 1; min-width: 0; display: flex; flex-direction: column; margin-left: 3px; border-left: 1px solid #f0f0f0; }
.clipx { flex: 1; overflow: hidden; }
table { width: 520px; table-layout: fixed; border-collapse: collapse; }
th { position: relative; height: 25px; padding: 0 0 0 6px; text-align: left; font-weight: 400; color: #4c607a; border-right: 1px solid #e5e5e5; }
td { height: 34px; padding: 0 0 0 6px; color: #6d6d6d; white-space: nowrap; }
th.c1 { width: 272px; padding-left: 18px; }
.c2 { width: 120px; }
.sort { position: absolute; left: 138px; top: 0; }
.fn { padding-left: 12px; color: #000; display: flex; align-items: center; gap: 5px; }
.hscroll { height: 15px; background: #f0f0f0; display: flex; align-items: center; padding: 0 5px 0 6px; }
.hscroll span { width: 284px; height: 15px; margin: 0 auto 0 5px; background: #cdcdcd; }
.status { height: 23px; display: flex; align-items: center; padding: 0 8px 0 14px; color: #2b3c55; }
.cnt { margin-right: auto; padding-right: 8px; border-right: 1px solid #eee; }
.v1 { width: 22px; height: 23px; display: grid; place-items: center; background: #cce8f6; border: 1px solid #26a0da; margin-right: 4px; }

/* Taskbar */
.taskbar { position: relative; height: 40px; display: flex; background: linear-gradient(90deg, #1f1630, #241a36 50%, #2e1d40); color: #fff; }
.start { width: 48px; display: grid; place-items: center; }
.tsearch { width: 344px; display: flex; align-items: center; background: #4f4462; padding: 0 15px 0 9px; gap: 9px; font-size: 14px; }
.tsearch input { flex: 1; border: 0; background: none; padding: 0; outline: 0; }
.tsearch input::placeholder { color: #b5aec0; }
.apps { display: flex; gap: 1px; }
.apps button { width: 48px; display: grid; place-items: center; }
.apps .tv { margin-right: 2px; }
.run { background: linear-gradient(#b48fe6, #b48fe6) 50% 100% / 40px 2px no-repeat; }
.act { background: linear-gradient(#b48fe6, #b48fe6) 50% 100% / 48px 2px no-repeat, #4e356f; }
.xt { font: 9px "DejaVu Sans", sans-serif; fill: #fff; }
.tray { margin-left: auto; display: flex; align-items: center; padding-right: 12px; gap: 8px; }
.m1 { margin: 0 3px 0 14px; }
.clock { width: 58px; margin: 0 6px 0 -2px; display: flex; flex-direction: column; text-align: center; line-height: 18px; white-space: nowrap; }
.note { position: relative; width: 25px; height: 20px; }
.note span { position: absolute; left: 6px; top: 6px; width: 18px; height: 18px; border-radius: 9px; background: #4b3573; border: 1px solid #9b86bb; font-size: 11px; line-height: 16px; text-align: center; }
.peek { width: 5px; border-left: 1px solid #75697f; }
```
